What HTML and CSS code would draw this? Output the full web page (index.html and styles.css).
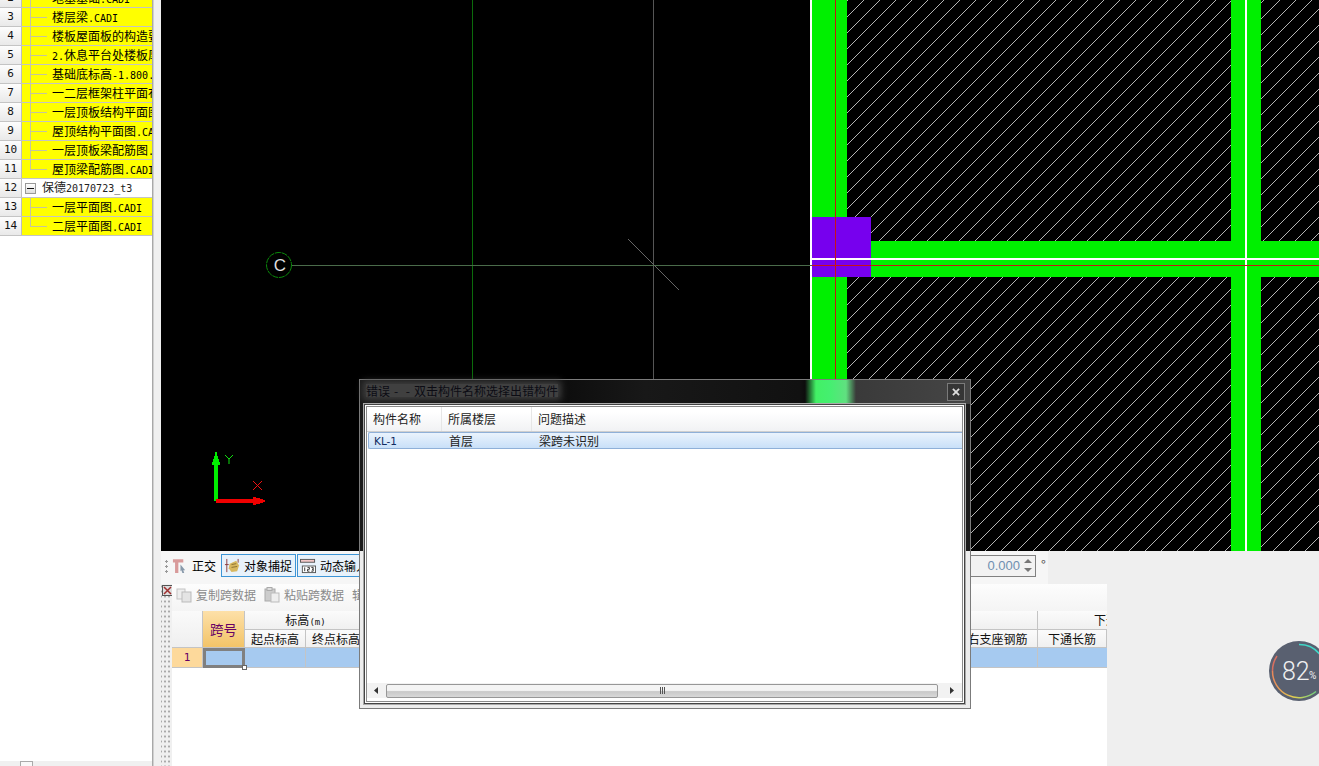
FILE: index.html
```html
<!DOCTYPE html>
<html lang="zh">
<head>
<meta charset="utf-8">
<title>错误</title>
<link rel="stylesheet" href="styles.css">
</head>
<body>
<div class="app">
  <aside class="side">
    <div class="tree">
      <div class="row"><span class="num">2</span><span class="node file"><span class="name">地基基础<span class="lat">.CADI</span></span></span></div>
      <div class="row"><span class="num">3</span><span class="node file"><span class="name">楼层梁<span class="lat">.CADI</span></span></span></div>
      <div class="row"><span class="num">4</span><span class="node file"><span class="name">楼板屋面板的构造要求</span></span></div>
      <div class="row"><span class="num">5</span><span class="node file"><span class="name"><span class="lat">2.</span>休息平台处楼板厚度</span></span></div>
      <div class="row"><span class="num">6</span><span class="node file"><span class="name">基础底标高<span class="lat">-1.800.CADI</span></span></span></div>
      <div class="row"><span class="num">7</span><span class="node file"><span class="name">一二层框架柱平面布置</span></span></div>
      <div class="row"><span class="num">8</span><span class="node file"><span class="name">一层顶板结构平面图</span></span></div>
      <div class="row"><span class="num">9</span><span class="node file"><span class="name">屋顶结构平面图<span class="lat">.CADI</span></span></span></div>
      <div class="row"><span class="num">10</span><span class="node file"><span class="name">一层顶板梁配筋图<span class="lat">.CADI</span></span></span></div>
      <div class="row"><span class="num">11</span><span class="node file last"><span class="name">屋顶梁配筋图<span class="lat">.CADI</span></span></span></div>
      <div class="row"><span class="num">12</span><span class="node group"><span class="minus"></span><span class="gname">保德<span class="lat">20170723_t3</span></span></span></div>
      <div class="row"><span class="num">13</span><span class="node file"><span class="name">一层平面图<span class="lat">.CADI</span></span></span></div>
      <div class="row"><span class="num">14</span><span class="node file last"><span class="name">二层平面图<span class="lat">.CADI</span></span></span></div>
    </div>
    <div class="hscroll"><span class="hthumb"></span></div>
  </aside>
  <div class="splitter"></div>
  <main class="main">
    <svg class="canvas" viewBox="161 0 1158 551" width="1158" height="551" aria-label="CAD canvas">
      <defs>
        <pattern id="hatch" width="16" height="16" patternUnits="userSpaceOnUse">
          <path d="M0 16L16 0" stroke="#b4b4b4" stroke-width="1" fill="none" shape-rendering="crispEdges"/>
        </pattern>
      </defs>
      <rect x="161" y="0" width="1158" height="551" fill="#000"/>
      <rect x="847" y="0" width="472" height="551" fill="url(#hatch)"/>
      <g shape-rendering="crispEdges">
        <rect x="812" y="0" width="35" height="551" fill="#00f000"/>
        <rect x="1231" y="0" width="30" height="551" fill="#00f000"/>
        <rect x="871" y="241" width="448" height="36" fill="#00f000"/>
        <rect x="812" y="217" width="59" height="60" fill="#7700ee"/>
        <rect x="810" y="0" width="2" height="551" fill="#fff"/>
        <rect x="812" y="258" width="507" height="2" fill="#fff"/>
        <rect x="1245" y="0" width="2" height="551" fill="#fff"/>
        <rect x="472" y="0" width="1" height="551" fill="#0b6b0b"/>
        <rect x="653" y="0" width="1" height="551" fill="#565656"/>
        <rect x="292" y="265" width="520" height="1" fill="#4a6b4a"/>
        <rect x="812" y="265" width="507" height="1" fill="#c81414"/>
        <rect x="835" y="0" width="1" height="551" fill="#c81414"/>
      </g>
      <path d="M628 239L679 290" stroke="#666" fill="none"/>
      <circle cx="279" cy="265" r="12.5" fill="none" stroke="#0a8a0a" stroke-width="1" stroke-dasharray="6 .8"/>
      <text x="280" y="271" class="axis-c" text-anchor="middle">C</text>
      <g shape-rendering="crispEdges">
        <rect x="214" y="461" width="4" height="40" fill="#00ee00"/>
        <path d="M215 452h2v4h1v3h1v3h1v3h-8v-3h1v-3h1v-3h1z" fill="#00ee00"/>
        <rect x="216" y="499" width="40" height="4" fill="#f00000"/>
        <path d="M253 497h3v1h4v1h3v1h2v2h-2v1h-3v1h-4v1h-3z" fill="#f00000"/>
      </g>
      <path d="M225 455l4 4 4-4M229 459v5" stroke="#10e010" fill="none"/>
      <path d="M253 481l9 9M262 481l-9 9" stroke="#f01010" fill="none"/>
    </svg>

    <div class="toolbar">
      <span class="grip"></span>
      <span class="tool plain">
        <svg class="ico" viewBox="0 0 17 17"><path d="M1 3h11M5 3v13" stroke="#d89a9a" stroke-width="3.500" fill="none"/><path d="M9 7l5 6-2 0 1 3-2 0-1-3-1 1z" fill="#8899aa"/></svg>
        <span>正交</span>
      </span>
      <span class="tool active snap">
        <svg class="ico" viewBox="0 0 17 17"><path d="M3 1v14M15 1v4" stroke="#8a3a3a" fill="none"/><path d="M1 7h4" stroke="#8a3a3a"/><path d="M6 6l7-3 3 5-2 6-6 1-3-4z" fill="#d8b860"/><path d="M8 7l5-1M8 10l6-1" stroke="#8a7030"/></svg>
        <span>对象捕捉</span>
      </span>
      <span class="tool active dyn">
        <svg class="ico" viewBox="0 0 17 17"><rect x=".5" y="1.500" width="15" height="3" fill="#f4c8c8" stroke="#555"/><rect x="2.500" y="8.500" width="14" height="7" fill="#fff" stroke="#555"/><path d="M5 10v4M8 10h2v2h-2v2h2M12 10h2v2h-1 1v2h-2" stroke="#333" fill="none"/></svg>
        <span class="tool-text">动态输入</span>
      </span>
      <span class="spacer"></span>
      <span class="spin"><span class="spinval">0.000</span><span class="arrows"><i class="up"></i><i class="down"></i></span></span>
      <span class="deg">°</span>
    </div>

    <div class="lower">
      <div class="dock">
        <svg class="dock-x" viewBox="0 0 11 11"><rect x=".5" y=".5" width="10" height="10" fill="#ddd" stroke="#555"/><path d="M2 2l7 7M9 2l-7 7" stroke="#a03030" stroke-width="1.500"/></svg>
      </div>
      <section class="panel">
        <div class="strip">
          <span class="act">
            <svg class="ico" viewBox="0 0 16 16"><rect x="1" y="2" width="8" height="10" fill="#eee" stroke="#c4c4c4"/><rect x="6" y="5" width="9" height="10" fill="#e4e4e4" stroke="#bbb"/></svg>
            <span>复制跨数据</span>
          </span>
          <span class="act">
            <svg class="ico" viewBox="0 0 16 16"><rect x="1" y="2" width="10" height="12" fill="#ccc" stroke="#aaa"/><rect x="3" y="0.500" width="5" height="3" fill="#ddd" stroke="#aaa"/><rect x="7" y="6" width="8" height="9" fill="#eee" stroke="#bbb"/></svg>
            <span>粘贴跨数据</span>
          </span>
          <span class="act"><span>辑</span></span>
        </div>
        <div class="sheet">
          <div class="c corner"></div>
          <div class="c key">跨号</div>
          <div class="c head span2">标高<span class="lat small">(m)</span></div>
          <div class="c head top"></div>
          <div class="c head top"></div>
          <div class="c head cut">下通长筋</div>
          <div class="c head">起点标高</div>
          <div class="c head">终点标高</div>
          <div class="c head"></div>
          <div class="c head">右支座钢筋</div>
          <div class="c head">下通长筋</div>
          <div class="c rownum">1</div>
          <div class="c sel"><i class="handle"></i></div>
          <div class="c data"></div>
          <div class="c data"></div>
          <div class="c data"></div>
          <div class="c data"></div>
          <div class="c data"></div>
        </div>
      </section>
      <div class="rest"></div>
    </div>
  </main>
</div>

<div class="dialog" role="dialog">
  <div class="titlebar">
    <span class="title">错误 - &nbsp;- 双击构件名称选择出错构件</span>
    <span class="close"><svg viewBox="0 0 9 9" width="8" height="8"><path d="M1 1l7 7M8 1l-7 7" stroke="#ddd" stroke-width="2"/></svg></span>
  </div>
  <div class="frame">
    <div class="client">
      <div class="lhead"><span class="lc1">构件名称</span><span class="lc2">所属楼层</span><span class="lc3">问题描述</span></div>
      <div class="lrow"><span class="lc1 code">KL-1</span><span class="lc2">首层</span><span class="lc3">梁跨未识别</span></div>
      <div class="lfill"></div>
      <div class="lscroll">
        <svg class="sarrow" viewBox="0 0 5 7"><path d="M4 0v7L0 3.500z" fill="#333"/></svg>
        <span class="sthumb"><i></i><i></i><i></i></span>
        <svg class="sarrow" viewBox="0 0 5 7"><path d="M1 0v7l4-3.500z" fill="#333"/></svg>
      </div>
    </div>
  </div>
</div>

<div class="gauge">
  <svg viewBox="0 0 60 60" width="60" height="60" class="gauge-ring">
    <defs>
      <linearGradient id="ringg" x1="0" y1="0" x2="1" y2="0">
        <stop offset="0" stop-color="#e8885a"/>
        <stop offset=".5" stop-color="#e0d050"/>
        <stop offset="1" stop-color="#70d080"/>
      </linearGradient>
    </defs>
    <circle cx="30" cy="30" r="30" fill="#596070"/>
    <path d="M3.500 30A26.500 26.500 0 0 0 47 50.500" stroke="url(#ringg)" stroke-width="1.500" fill="none"/>
    <path d="M3.500 30A26.500 26.500 0 0 1 8 15" stroke="#d87060" stroke-width="1.500" fill="none"/>
    <path d="M30 3.500A26.500 26.500 0 0 1 52 15" stroke="#40d8c8" stroke-width="1.500" fill="none"/>
  </svg>
  <span class="gval">82</span><span class="gpct">%</span>
</div>
</body>
</html>
```

FILE: styles.css
```css
* { box-sizing: border-box; }
html, body { margin: 0; height: 100%; overflow: hidden; background: #efefef; }
body {
  font: 12px/1 "Noto Sans CJK SC", "Liberation Sans", sans-serif;
  color: #000;
  width: 1319px;
  height: 766px;
  position: relative;
}
.lat { font-family: "DejaVu Sans Mono", "Liberation Mono", monospace; font-size: 10px; }
.small { font-size: 9px; }

.app { display: flex; height: 766px; }

/* left tree */
.side { width: 153px; display: flex; flex-direction: column; background: #fff; border-right: 1px solid #a8a8a8; }
.tree { flex: 1; overflow: hidden; margin-top: -11px; }
.row { display: flex; height: 19px; border-bottom: 1px solid #c4c4c4; white-space: nowrap; }
.num {
  width: 22px; flex: none; text-align: center; font: 11px/18px "DejaVu Sans Mono", monospace;
  background: linear-gradient(#fdfdfd, #e9e9e9); border-right: 1px solid #bdbdbd; color: #111;
}
.node { flex: 1; min-width: 0; position: relative; overflow: hidden; line-height: 18px; }
.file { background: #ffff00; padding-left: 30px; }
.file::before { content: ""; position: absolute; left: 8px; top: -1px; bottom: -1px; width: 1px; background: #c4c4a0; }
.file::after { content: ""; position: absolute; left: 8px; top: 9px; width: 17px; height: 1px; background: #c4c4a0; }
.file.last::before { bottom: 9px; }
.name { display: block; white-space: nowrap; }
.group { display: flex; align-items: center; padding-left: 3px; background: #fff; color: #222; }
.minus { width: 11px; height: 11px; border: 1px solid #999; background: linear-gradient(#fff, #ddd); position: relative; flex: none; }
.minus::after { content: ""; position: absolute; left: 1px; right: 1px; top: 4px; height: 1px; background: #111; }
.gname { margin-left: 6px; }
.hscroll { height: 5px; background: #f0f0f0; position: relative; }
.hthumb { display: block; width: 13px; height: 5px; margin-left: 20px; border: 1px solid #aaa; border-bottom: 0; background: #f8f8f8; }

.splitter { width: 8px; background: #f0f0f0; border-left: 1px solid #d0d0d0; }

/* main column */
.main { flex: 1; min-width: 0; display: flex; flex-direction: column; }
.canvas { display: block; flex: none; }
.axis-c { font: 17px "Liberation Sans", sans-serif; fill: #ddd; }

.toolbar {
  height: 33px; flex: none; display: flex; align-items: flex-start; padding: 3px 0 0 4px;
  background: linear-gradient(90deg, #f6f6f6 0, #f6f6f6 887px, #efefef 887px);
}
.grip {
  width: 3px; height: 15px; margin: 5px 3px 0 0;
  background: radial-gradient(circle, #999 1px, transparent 1.2px) 0 0 / 3px 5px;
}
.tool { display: flex; align-items: center; height: 23px; gap: 4px; padding: 0 3px; }
.tool.plain { padding-left: 1px; padding-right: 4px; }
.tool.active { border: 1px solid #3d95d6; background: #e8f2fb; padding: 0 2px; }
.snap { width: 75px; margin-left: 1px; }
.dyn { width: 75px; margin-left: 1px; overflow: hidden; flex: none; }
.tool-text { white-space: nowrap; flex: none; }
.ico { width: 16px; height: 16px; flex: none; display: block; }
.spacer { flex: 1; }
.spin {
  width: 68px; height: 22px; display: flex; align-items: center; padding-bottom: 1px;
  border: 1px solid #808080; background: #f2f2f2; color: #6f8fb0; font-size: 13px;
  margin-top: 1px;
}
.spinval { flex: 1; text-align: right; font-family: "Liberation Sans", sans-serif; padding-right: 1px; }
.arrows { width: 14px; display: flex; flex-direction: column; gap: 5px; align-items: center; }
.up { border: 4px solid transparent; border-top: 0; border-bottom: 4px solid #777; }
.down { border: 4px solid transparent; border-bottom: 0; border-top: 4px solid #777; }
.deg { width: 9px; margin: 4px 269px 0 5px; color: #555; font-size: 13px; }

.lower { flex: 1; display: flex; min-height: 0; }
.dock {
  width: 11px; flex: none; padding: 1px 0 0 1px;
  background: radial-gradient(circle, #aaa 1px, transparent 1.2px) 2px 0 / 4px 5px, #f0f0f0;
}
.dock-x { width: 11px; height: 11px; display: block; }
.panel { width: 935px; flex: none; background: #fff; display: flex; flex-direction: column; overflow: hidden; }
.strip {
  height: 27px; flex: none; display: flex; align-items: center; gap: 8px; padding: 0 0 5px 4px;
  background: linear-gradient(#fdfdfd, #f4f4f4); color: #8a8a8a;
}
.act { display: flex; align-items: center; gap: 4px; }
.sheet { display: grid; grid-template-columns: 31px 42px 61px 61px 591px 80px 69px; grid-template-rows: 19px 18px 20px; }
.c { border-right: 1px solid #c4c4c4; border-bottom: 1px solid #c4c4c4; text-align: center; overflow: hidden; white-space: nowrap; }
.corner { grid-row: 1 / span 2; background: linear-gradient(#fafafa, #efefef); }
.key {
  grid-row: 1 / span 2; grid-column: 2; font-size: 13.5px; line-height: 37px; color: #660066;
  background: linear-gradient(#fde0a8, #f3c468);
}
.head { background: linear-gradient(#fbfbfb, #f0f0f0); line-height: 17px; color: #111; }
.span2 { grid-column: 3 / span 2; }
.cut { text-align: left; padding-left: 56px; border-right: 0; }
.rownum { background: #fdd99b; color: #660066; font: 11px/19px "DejaVu Sans Mono", monospace; }
.data { background: #a6caf0; }
.data:last-child { border-right: 0; }
.sel { background: #a6caf0; border: 3px solid #808080; overflow: visible; position: relative; }
.handle { position: absolute; right: -5px; bottom: -5px; width: 5px; height: 5px; background: #fff; border: 1px solid #666; }
.rest { flex: 1; background: #efefef; }

/* dialog */
.dialog {
  position: absolute; left: 359px; top: 379px; width: 612px; height: 330px;
  border: 1px solid #7b7b7b; display: flex; flex-direction: column;
  background: linear-gradient(#1c1c1c 0, #1c1c1c 171px, #ededed 171px);
}
.titlebar {
  height: 24px; flex: none; display: flex; align-items: center; justify-content: space-between;
  padding: 0 5px 3px 6px; color: #0c0c14; font-size: 12px; word-spacing: 1.2px;
  background: linear-gradient(90deg, #1a1a1a 0, #0d0d0d 200px, #181818 285px, #111 440px, #0d0d0d 445px, #42f065 456px, #45ef70 470px, #60e080 486px, #3a3a3a 496px, #454545 609px);
}
.title { background: #404040; box-shadow: 0 0 7px 3px #404040; line-height: 13px; }
.close {
  width: 18px; height: 18px; display: flex; align-items: center; justify-content: center;
  border: 1px solid #7a7a7a; background: #353535; margin-top: 3px;
}
.frame { flex: 1; margin: 0 5px 4px 4px; border: 1px solid #444; padding: 1px; background: #fff; min-height: 0; outline: 1px solid #aaa; }
.client { height: 100%; border: 1px solid #8a8a8a; background: #fff; display: flex; flex-direction: column; }
.lhead {
  height: 25px; flex: none; display: flex; align-items: center; border-bottom: 1px solid #cfcfcf;
  background: linear-gradient(#fff 20%, #f1f2f4); color: #222; font-size: 12px;
}
.lc1, .lc2, .lc3 { display: block; padding-left: 6px; }
.lc1 { width: 75px; }
.lc2 { width: 90px; }
.lhead .lc1, .lhead .lc2 { border-right: 1px solid #e6e6e6; line-height: 24px; }
.lrow {
  height: 17px; flex: none; display: flex; align-items: center; margin-left: 1px;
  border: 1px solid #8fb0d8; border-radius: 2px 0 0 2px; border-right: 0;
  background: linear-gradient(#eaf3fd, #c9e0f8); color: #222;
}
.lrow .lc1 { width: 74px; padding-left: 5px; }
.code { color: #102a60; font: 10.500px "DejaVu Sans", sans-serif; }
.lfill { flex: 1; }
.lscroll { height: 15px; flex: none; margin-bottom: 3px; display: flex; align-items: center; padding: 0 0 0 7px; background: #f2f2f2; }
.sarrow { width: 5px; height: 7px; flex: none; }
.sthumb {
  width: 552px; height: 14px; margin: 0 11px 0 7px; border: 1px solid #979797; border-radius: 2px;
  background: linear-gradient(#f4f4f4 45%, #c9c9c9 55%, #d8d8d8);
  display: flex; align-items: center; justify-content: center; gap: 1px;
}
.sthumb i { width: 1px; height: 7px; background: #555; }

/* gauge */
.gauge { position: absolute; left: 1269px; top: 641px; width: 60px; height: 60px; color: #f0f0f0; }
.gauge-ring { position: absolute; left: 0; top: 0; display: block; }
.gval { position: absolute; left: 13px; top: 18px; font: 300 25px/25px Roboto, sans-serif; }
.gpct { position: absolute; left: 40px; top: 30px; font: 10px/10px Roboto, sans-serif; }
```
